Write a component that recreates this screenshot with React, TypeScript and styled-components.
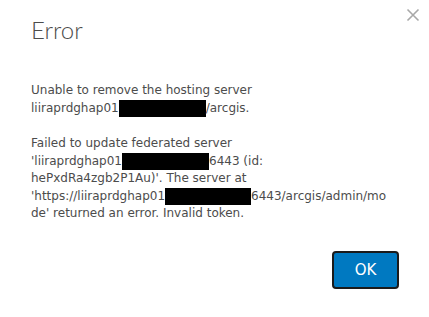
import React from "react";
import styled, { createGlobalStyle } from "styled-components";

const Global = createGlobalStyle`
  html, body { margin: 0; padding: 0; background: #fff; }
  body { width: 429px; height: 317px; overflow: hidden; }
`;

const Dialog = styled.div`
  position: relative;
  width: 429px;
  height: 317px;
  box-sizing: border-box;
  padding: 16px 30px 0 31px;
  display: flex;
  flex-direction: column;
  background: #fff;
`;

const Title = styled.h1`
  margin: 0;
  font-family: Lato, "Open Sans", sans-serif;
  font-weight: 300;
  font-size: 24px;
  line-height: 28px;
  color: #4c4c4c;
`;

const Close = styled.button`
  position: absolute;
  top: 8px;
  right: 9px;
  width: 14px;
  height: 14px;
  padding: 0;
  border: 0;
  background: none;
  display: flex;
  align-items: center;
  justify-content: center;
`;

const Body = styled.div`
  margin-top: 38px;
  display: flex;
  flex-direction: column;
  gap: 18px;
  font-family: "DejaVu Sans", Verdana, sans-serif;
  font-size: 12px;
  line-height: 17.5px;
  color: #4c4c4c;
`;

const Para = styled.p`
  margin: 0;
  white-space: nowrap;
`;

const Redact = styled.span<{ $w: number }>`
  display: inline-block;
  width: ${(p) => p.$w}px;
  height: 17.5px;
  background: #000;
  vertical-align: top;
`;

const Footer = styled.div`
  display: flex;
  justify-content: flex-end;
  margin-top: 28px;
`;

const OkButton = styled.button`
  width: 67px;
  height: 38px;
  box-sizing: border-box;
  border: 2px solid #1b1b1b;
  border-radius: 4px;
  background: #0079c1;
  color: #fff;
  font-family: "DejaVu Sans", Verdana, sans-serif;
  font-size: 15px;
  cursor: pointer;
`;

export default function App() {
  return (
    <>
      <Global />
      <Dialog>
        <Close aria-label="Close">
          <svg width="14" height="14" viewBox="0 0 14 14">
            <path d="M1.5 1.5 L12.5 12.5 M12.5 1.5 L1.5 12.5" stroke="#a8a8a8" strokeWidth="1.6" fill="none" />
          </svg>
        </Close>
        <Title>Error</Title>
        <Body>
          <Para>
            Unable to remove the hosting server
            <br />
            liiraprdghap01<Redact $w={87} />/arcgis.
          </Para>
          <Para>
            Failed to update federated server
            <br />
            'liiraprdghap01<Redact $w={87} />6443 (id:
            <br />
            hePxdRa4zgb2P1Au)'. The server at
            <br />
            'https://liiraprdghap01<Redact $w={86} />6443/arcgis/admin/mo
            <br />
            de' returned an error. Invalid token.
          </Para>
        </Body>
        <Footer>
          <OkButton>OK</OkButton>
        </Footer>
      </Dialog>
    </>
  );
}
